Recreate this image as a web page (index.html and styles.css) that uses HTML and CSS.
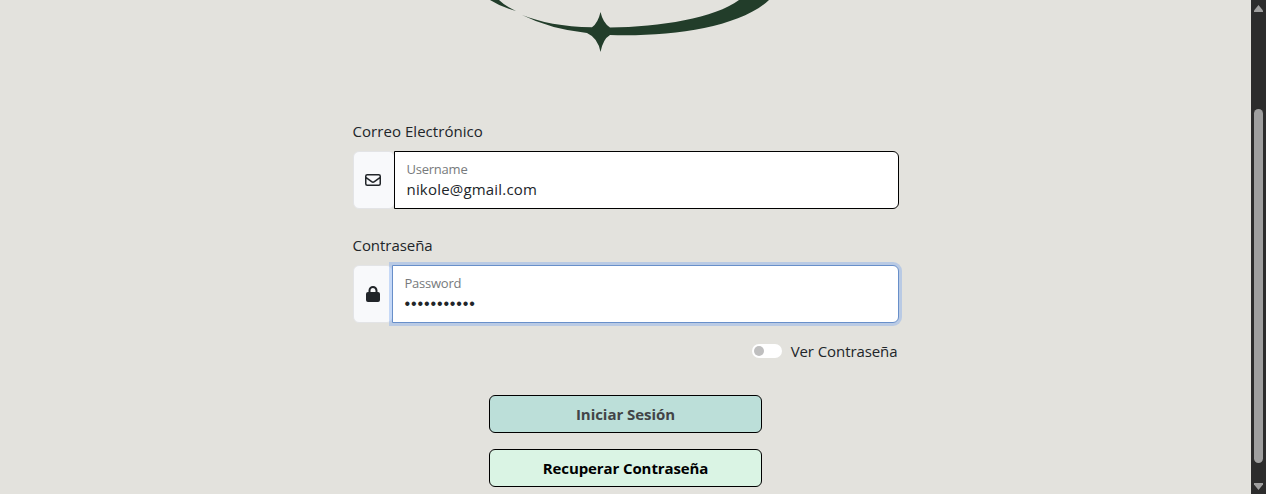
FILE: index.html
```html
<!DOCTYPE html>
<html lang="es">
<head>
<meta charset="utf-8">
<title>Iniciar Sesión</title>
<link rel="stylesheet" href="styles.css">
</head>
<body>
<main class="page">
  <svg class="logo" width="300" height="60" viewBox="0 0 300 60" aria-hidden="true">
    <path d="M10 0 Q21 7 36 11 Q25 6 19 0Z"/>
    <path d="M42 15 C60 22 83 27 112 27.300 Q118 23 120.500 12 Q123 23 130 27.500 C180 27 235 18 259 0 H289 C260 27 192 37 130 35 Q123 39 120.500 52 Q118 38 107 33 Q70 29 42 15Z"/>
  </svg>
  <form class="login">
    <span class="label label-email">Correo Electrónico</span>
    <div class="group">
      <span class="addon addon-mail">
        <svg width="16" height="16" viewBox="0 0 16 16"><path fill="none" stroke="#212529" stroke-width="1.500" d="M2.250 2.750h11.500q1.500 0 1.500 1.500v7.500q0 1.500-1.500 1.500H2.250q-1.500 0-1.500-1.500v-7.500q0-1.500 1.500-1.500ZM.8 5.400l5.800 4.300q1.400 1 2.800 0l5.800-4.300"/></svg>
      </span>
      <div class="field">
        <span class="hint">Username</span>
        <span class="value">nikole@gmail.com</span>
      </div>
    </div>
    <span class="label label-pass">Contraseña</span>
    <div class="group">
      <span class="addon addon-lock">
        <svg width="14" height="16" viewBox="0 0 448 512"><path fill="#212529" d="M144 144v48h160v-48a80 80 0 0 0-160 0ZM80 192v-48a144 144 0 0 1 288 0v48h16q64 0 64 64v192q0 64-64 64H64q-64 0-64-64V256q0-64 64-64Z"/></svg>
      </span>
      <div class="field focused">
        <span class="hint">Password</span>
        <span class="dots">•••••••••••</span>
      </div>
    </div>
    <div class="switch-row"><span class="switch"></span><span class="switch-label">Ver Contraseña</span></div>
    <div class="actions">
      <button type="button" class="btn btn-login">Iniciar Sesión</button>
      <button type="button" class="btn btn-recover">Recuperar Contraseña</button>
    </div>
  </form>
</main>
<aside class="scrollbar">
  <svg width="9" height="7" viewBox="0 0 9 7"><path d="M4.500 0 9 5.500V7H0V5.500Z"/></svg>
  <div class="thumb"></div>
  <svg class="down" width="9" height="7" viewBox="0 0 9 7"><path d="M0 0H9V1.500L4.500 7 0 1.500Z"/></svg>
</aside>
</body>
</html>
```
FILE: styles.css
```css
* { box-sizing: border-box; }
body {
  margin: 0;
  height: 494px;
  display: flex;
  overflow: hidden;
  background: #e3e2dd;
  color: #212529;
  font: 15px/24px "Open Sans", "Noto Sans", sans-serif;
}
.page { flex: 1; display: flex; flex-direction: column; align-items: center; }
.logo { display: block; flex: none; margin-left: 9px; fill: #223d2a; }
.login { width: 546px; padding-top: 59px; display: flex; flex-direction: column; }
.label { height: 24px; margin-bottom: 8px; white-space: nowrap; }
.label-email { letter-spacing: 0.050px; }
.label-pass { letter-spacing: -0.050px; }
.group { display: flex; height: 58px; margin-bottom: 24px; }
.addon {
  display: flex;
  align-items: center;
  justify-content: center;
  background: #f8f9fb;
  border: 1px solid #e3e4e6;
  border-radius: 6px;
  margin-right: -1px;
}
.addon-mail { width: 42px; padding-right: 1px; }
.addon-lock { width: 40px; }
.addon svg { display: block; }
.field {
  flex: 1;
  position: relative;
  display: flex;
  flex-direction: column;
  padding: 7px 12px 0;
  background: #fff;
  border: 1px solid #000;
  border-radius: 0 6px 6px 0;
}
.focused { border-color: #688fc9; box-shadow: 0 0 0 3px rgba(110, 160, 240, .36); }
.hint { font-size: 13px; line-height: 20px; letter-spacing: -0.230px; color: #777a7c; }
.value { line-height: 20px; letter-spacing: 0.190px; }
.dots { font: 16px/20px "Liberation Sans", sans-serif; letter-spacing: 0.880px; padding-top: 1px; }
.switch-row { display: flex; align-items: center; justify-content: flex-end; gap: 9px; height: 24px; margin-top: -8px; padding-right: 1px; }
.switch { width: 30px; height: 14px; border-radius: 7px; background: #fff; display: flex; align-items: center; padding-left: 2px; }
.switch::before { content: ""; width: 10px; height: 10px; border-radius: 50%; background: #bfbfbf; }
.switch-label { letter-spacing: -0.080px; }
.actions { display: flex; flex-direction: column; align-items: center; gap: 16px; padding-top: 32px; }
.btn {
  width: 273px;
  height: 38px;
  padding: 0;
  border: 1px solid #000;
  border-radius: 6px;
  font: 700 15px/24px "Open Sans", "Noto Sans", sans-serif;
}
.btn-login { background: #bcdfd9; color: #424447; letter-spacing: -0.040px; }
.btn-recover { background: #daf4e4; color: #000; letter-spacing: -0.100px; }
.scrollbar { width: 15px; background: #2c2c2c; display: flex; flex-direction: column; align-items: center; padding-top: 5px; }
.scrollbar svg { display: block; fill: #9f9f9f; flex: none; }
.thumb { width: 9px; height: 354px; margin-top: 97px; border-radius: 5px; background: #9f9f9f; }
.scrollbar .down { margin-top: 20px; }
```
